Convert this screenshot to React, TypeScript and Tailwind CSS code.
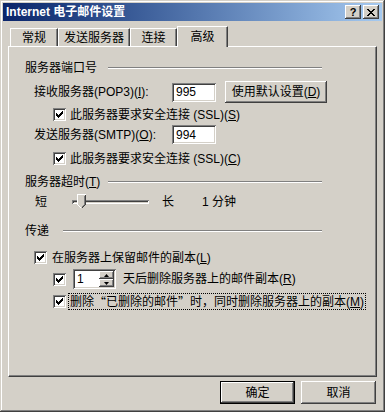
import React from "react";

const raised =
  "shadow-[inset_-1px_-1px_#404040,inset_1px_1px_#ffffff,inset_-2px_-2px_#808080,inset_2px_2px_#d4d0c8]";
const sunken =
  "shadow-[inset_1px_1px_#808080,inset_-1px_-1px_#ffffff,inset_2px_2px_#404040,inset_-2px_-2px_#d4d0c8]";

const Check = () => (
  <span className={`w-[13px] h-[13px] bg-white shrink-0 flex items-center justify-center ${sunken}`}>
    <svg width="7" height="7" viewBox="0 0 7 7" shapeRendering="crispEdges">
      <rect x="0" y="2" width="1" height="3" fill="#000" />
      <rect x="1" y="3" width="1" height="3" fill="#000" />
      <rect x="2" y="4" width="1" height="3" fill="#000" />
      <rect x="3" y="3" width="1" height="3" fill="#000" />
      <rect x="4" y="2" width="1" height="3" fill="#000" />
      <rect x="5" y="1" width="1" height="3" fill="#000" />
      <rect x="6" y="0" width="1" height="3" fill="#000" />
    </svg>
  </span>
);

const Etched = ({ w }: { w: string }) => (
  <div className={`${w} h-0 border-t border-t-[#808080] border-b border-b-white`} />
);

const Field = ({ v }: { v: string }) => (
  <div className={`w-[44px] h-[19px] bg-white ${sunken} flex items-center pl-[4px] text-[12px] text-black`}>{v}</div>
);

const cjk = { fontFamily: '"Noto Sans CJK SC", sans-serif' };

export default function App() {
  return (
    <div
      className="w-[385px] h-[412px] bg-[#d4d0c8] relative shadow-[inset_-1px_-1px_#404040,inset_1px_1px_#d4d0c8,inset_-2px_-2px_#808080,inset_2px_2px_#ffffff] p-[3px] flex flex-col text-black text-[12px] leading-none"
      style={{ fontFamily: '"Liberation Sans", "Noto Sans CJK SC", sans-serif' }}
    >
      {/* title bar */}
      <div className="h-[18px] bg-gradient-to-r from-[#0a246a] to-[#a6caf0] flex items-center pl-[3px] pr-[3px]">
        <span className="text-white font-bold text-[12px]">Internet 电子邮件设置</span>
        <div className="ml-auto flex gap-[2px]">
          <div className={`w-[16px] h-[14px] bg-[#d4d0c8] ${raised} flex items-center justify-center font-bold text-[11px]`}>?</div>
          <div className={`w-[16px] h-[14px] bg-[#d4d0c8] ${raised} flex items-center justify-center`}>
            <svg width="8" height="7" viewBox="0 0 8 7" shapeRendering="crispEdges">
              <path d="M0 0h2v1H0zM6 0h2v1H6zM1 1h2v1H1zM5 1h2v1H5zM2 2h4v1H2zM3 3h2v1H3zM2 4h4v1H2zM1 5h2v1H1zM5 5h2v1H5zM0 6h2v1H0zM6 6h2v1H6z" fill="#000" />
            </svg>
          </div>
        </div>
      </div>

      {/* tabs */}
      <div className="mt-[5px] h-[20px] flex items-end pl-[7px]">
        <div className="w-[48px] h-[18px] border-l border-t border-white border-r border-r-[#404040] shadow-[inset_-1px_0_#808080] flex items-center justify-center pt-[1px]">常规</div>
        <div className="w-[72px] h-[18px] border-l border-t border-white border-r border-r-[#404040] shadow-[inset_-1px_0_#808080] flex items-center justify-center pt-[1px]">发送服务器</div>
        <div className="w-[47px] h-[18px] border-l border-t border-white border-r border-r-[#404040] shadow-[inset_-1px_0_#808080] flex items-center justify-center pt-[1px]">连接</div>
        <div className="w-[51px] h-[21px] -mb-px relative z-10 bg-[#d4d0c8] border-l border-t border-white border-r border-r-[#404040] shadow-[inset_-1px_0_#808080] flex items-start justify-center pt-[4px]">高级</div>
      </div>

      {/* panel */}
      <div className="mx-[5px] h-[331px] border-t border-l border-white border-r border-b border-r-[#404040] border-b-[#404040] shadow-[inset_-1px_-1px_#808080] flex flex-col">
        {/* header 1 */}
        <div className="mt-[14px] h-[14px] flex items-center ml-[16px]">
          <span className="w-[83px]">服务器端口号</span>
          <Etched w="w-[214px]" />
        </div>
        {/* pop3 */}
        <div className="mt-[6px] h-[22px] flex items-center ml-[25px]">
          <span className="w-[138px]">接收服务器(POP3)(<u>I</u>):</span>
          <Field v="995" />
          <div className={`ml-[9px] w-[102px] h-[22px] ${raised} flex items-center justify-center`}>使用默认设置(<u>D</u>)</div>
        </div>
        <div className="mt-[5px] h-[13px] flex items-center ml-[44px]">
          <Check />
          <span className="ml-[4px]">此服务器要求安全连接 (SSL)(<u>S</u>)</span>
        </div>
        {/* smtp */}
        <div className="mt-[4px] h-[19px] flex items-center ml-[25px]">
          <span className="w-[138px]">发送服务器(SMTP)(<u>O</u>):</span>
          <Field v="994" />
        </div>
        <div className="mt-[8px] h-[13px] flex items-center ml-[44px]">
          <Check />
          <span className="ml-[4px]">此服务器要求安全连接 (SSL)(<u>C</u>)</span>
        </div>
        {/* header 2 */}
        <div className="mt-[10px] h-[14px] flex items-center ml-[16px]">
          <span className="w-[83px]">服务器超时(<u>T</u>)</span>
          <Etched w="w-[214px]" />
        </div>
        {/* slider */}
        <div className="mt-[4px] h-[18px] flex items-center ml-[26px]">
          <span className="w-[37px]">短</span>
          <div className="relative w-[77px] h-[18px] flex items-center">
            <div className="w-full h-[4px] shadow-[inset_1px_1px_#808080,inset_-1px_-1px_#ffffff,inset_2px_2px_#404040]" />
            <svg className="absolute left-[5px] top-[1px]" width="9" height="15" viewBox="0 0 9 15" shapeRendering="crispEdges">
              <polygon points="0.5,0.5 8.5,0.5 8.5,10.5 4.5,14.5 0.5,10.5" fill="#d4d0c8" />
              <polyline points="0.5,10.5 0.5,0.5 8.5,0.5" fill="none" stroke="#ffffff" />
              <polyline points="8.5,0.5 8.5,10.5 4.5,14.5" fill="none" stroke="#404040" />
              <polyline points="7.5,1.5 7.5,10.5 4.5,13.5" fill="none" stroke="#808080" />
              <line x1="0.5" y1="10.5" x2="4.5" y2="14.5" stroke="#ffffff" />
            </svg>
          </div>
          <span className="ml-[13px] w-[40px]">长</span>
          <span>1 分钟</span>
        </div>
        {/* header 3 */}
        <div className="mt-[13px] h-[14px] flex items-center ml-[16px]">
          <span className="w-[38px]">传递</span>
          <Etched w="w-[259px]" />
        </div>
        <div className="mt-[13px] h-[13px] flex items-center ml-[25px]">
          <Check />
          <span className="ml-[5px]">在服务器上保留邮件的副本(<u>L</u>)</span>
        </div>
        <div className="mt-[5px] h-[20px] flex items-center ml-[44px]">
          <Check />
          <div className={`ml-[7px] w-[43px] h-[20px] bg-white ${sunken} flex items-center pl-[4px] relative`}>
            1
            <div className="absolute right-[2px] top-[2px] bottom-[2px] w-[15px] flex flex-col">
              <div className={`flex-1 bg-[#d4d0c8] ${raised} flex items-center justify-center`}>
                <svg width="5" height="3" viewBox="0 0 5 3"><polygon points="2.5,0 5,3 0,3" fill="#000" /></svg>
              </div>
              <div className={`flex-1 bg-[#d4d0c8] ${raised} flex items-center justify-center`}>
                <svg width="5" height="3" viewBox="0 0 5 3"><polygon points="0,0 5,0 2.5,3" fill="#000" /></svg>
              </div>
            </div>
          </div>
          <span className="ml-[7px]">天后删除服务器上的邮件副本(<u>R</u>)</span>
        </div>
        <div className="mt-[4px] h-[17px] flex items-center ml-[44px]">
          <Check />
          <span className="ml-[2px] h-[17px] px-[1px] flex items-center border border-dotted border-black">
            删除<span style={cjk}>“</span>已删除的邮件<span style={cjk}>”</span>时，同时删除服务器上的副本(<u>M</u>)
          </span>
        </div>
      </div>

      {/* buttons */}
      <div className="mt-[4px] flex justify-end gap-[6px] pr-[6px]">
        <div className="w-[75px] h-[23px] border border-black bg-[#d4d0c8] shadow-[inset_-1px_-1px_#404040,inset_1px_1px_#ffffff,inset_-2px_-2px_#808080] flex items-center justify-center">确定</div>
        <div className={`w-[75px] h-[23px] ${raised} flex items-center justify-center`}>取消</div>
      </div>
    </div>
  );
}
